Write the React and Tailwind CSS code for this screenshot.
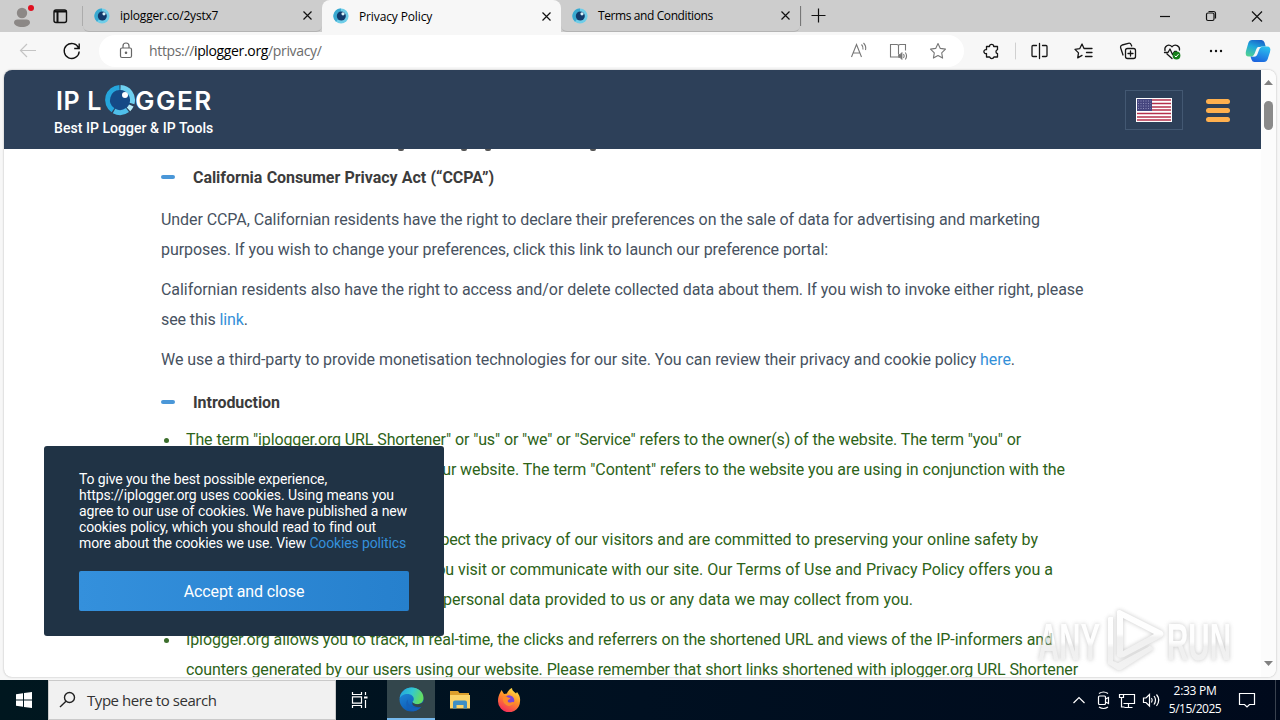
import clsx from "clsx";

const TABS = [
  {
    title: "iplogger.co/2ystx7",
    titleStyle: "tracking-[-0.2px]",
  },
  {
    title: "Privacy Policy",
    titleStyle: "tracking-[-0.13px]",
    active: true,
  },
  {
    title: "Terms and Conditions",
    titleStyle: "tracking-[-0.4px]",
  },
];

const Favicon = () => (
  <svg width="16" height="16" viewBox="0 0 16 16" className="shrink-0">
    <circle cx="8" cy="8" r="7.6" fill="#6fcde8" />
    <path d="M8 .4a7.6 7.6 0 0 0-5 13.3L8 8Z" fill="#3aa9d0" />
    <circle cx="8.3" cy="8" r="4.5" fill="#123a6b" />
    <circle cx="10" cy="5.800" r="1.600" fill="#d8f3fb" />
  </svg>
);

const CloseIcon = () => (
  <svg width="9" height="9" viewBox="0 0 9 9" stroke="#111" strokeWidth="1.2">
    <path d="M.5.5l8 8M8.500.5l-8 8" />
  </svg>
);

// A single line of text stretched to a given width
const Line = ({ className, children }) => (
  <span
    className={clsx(
      "block whitespace-nowrap [text-align-last:justify]",
      className,
    )}
  >
    {children}
  </span>
);

const TabBar = () => (
  <div className="flex h-8 items-start bg-[#cdcdcd]">
    <div className="flex h-8 w-[83px] items-center">
      <svg width="83" height="32" viewBox="0 0 83 32" fill="none">
        <circle cx="22" cy="13" r="5.2" fill="#8c8886" />
        <path
          d="M14 22.500c0-2 1.500-3 3.500-3h9c2 0 3.500 1 3.500 3 0 2.500-3.500 4.500-8 4.500s-8-2-8-4.500Z"
          fill="#8c8886"
        />
        <circle cx="31" cy="8" r="3" fill="#e01020" />
        <rect
          x="54"
          y="10"
          width="12.500"
          height="12.500"
          rx="2"
          stroke="#111"
          strokeWidth="1.400"
        />
        <path d="M54 11.500h12.500M57.500 12v10" stroke="#111" strokeWidth="2" />
        <path d="M83 6v20" stroke="#8a8a8a" />
      </svg>
    </div>
    {TABS.map((tab) => (
      <div
        key={tab.title}
        className={clsx(
          "flex h-8 w-[239px] items-center pr-[10px] pl-[11px]",
          tab.active
            ? "rounded-t-lg bg-[#f7f7f7]"
            : "rounded-b-md border-b border-[#b4b4b4]",
        )}
      >
        <Favicon />
        <span
          className={clsx(
            "ml-[10px] pt-px text-[12px] leading-4 whitespace-nowrap text-black",
            tab.titleStyle,
          )}
        >
          {tab.title}
        </span>
        <span className="ml-auto">
          <CloseIcon />
        </span>
      </div>
    ))}
    <svg
      width="480"
      height="32"
      viewBox="800 0 480 32"
      fill="none"
      stroke="#111"
      strokeWidth="1.200"
    >
      <path d="M800.500 6v20" stroke="#777" />
      <path d="M811.500 15.500h14M818.500 8.500v14" />
      <path d="M1160 16.500h10" />
      <rect x="1206.500" y="13" width="7.500" height="7.500" rx="1.500" />
      <path d="M1208.500 11.500h5a2 2 0 0 1 2 2v5" />
      <path d="M1252 11.500l10 10M1262 11.500l-10 10" />
    </svg>
  </div>
);

const Toolbar = () => (
  <div className="flex h-[38px] items-start bg-[#f7f7f7]">
    <svg width="99" height="38" viewBox="0 32 99 38" fill="none">
      <path
        d="M20.500 50.500h15.500M27 44l-6.500 6.500L27 57"
        stroke="#c4c4c4"
        strokeWidth="1.200"
      />
      <path
        d="M78.600 48A7.500 7.500 0 1 0 79.200 51.500M79.200 43.500v5h-5"
        stroke="#111"
        strokeWidth="1.400"
      />
    </svg>
    <div className="mt-[3px] flex h-8 w-[865px] items-center rounded-full bg-white">
      <svg
        width="50"
        height="32"
        viewBox="99 35 50 32"
        fill="none"
        stroke="#666"
        strokeWidth="1.200"
      >
        <rect x="120.500" y="48" width="11" height="9.500" rx="1.500" />
        <path d="M123 48v-2a3 3 0 0 1 6 0v2" />
        <circle cx="126" cy="52.800" r=".7" fill="#666" />
      </svg>
      <span className="text-[14px] leading-5 tracking-[-0.35px] whitespace-nowrap text-[#6b6b6b]">
        https://<span className="text-black">iplogger.org</span>/privacy/
      </span>
      <svg
        width="120"
        height="32"
        viewBox="844 35 120 32"
        fill="none"
        stroke="#777"
        strokeWidth="1.100"
        className="ml-auto"
      >
        <path d="M851.500 57l5-12.500 5 12.500M853.300 53h6.500" />
        <path d="M861.500 44.500q2 2 1.500 5M863.500 43q3 3 2 7" />
        <path d="M898.500 46q0-1.500-1.500-1.500h-6.500v12.500h7.500M898.500 46q0-1.500 1.500-1.500h5.500v6M898.500 46v8" />
        <path
          d="M898.500 54.500h1.500l2-2v7l-2-2h-1.500Z"
          fill="#777"
          strokeWidth=".8"
        />
        <path d="M903.500 54q1.500 2 0 4M905.300 52.500q2.500 3.500 0 7" />
        <path
          d="M938 43.500l2.300 4.900 5.200.7-3.800 3.700.9 5.300-4.600-2.600-4.600 2.600.9-5.300-3.800-3.700 5.200-.7Z"
          strokeLinejoin="round"
        />
      </svg>
    </div>
    <svg
      width="316"
      height="38"
      viewBox="964 32 316 38"
      fill="none"
      stroke="#161616"
      strokeWidth="1.300"
      strokeLinejoin="round"
      strokeLinecap="round"
    >
      <defs>
        <linearGradient id="copilotA" x1=".7" y1="0" x2=".3" y2="1">
          <stop offset="0" stopColor="#1a62c8" />
          <stop offset=".45" stopColor="#1fa6dc" />
          <stop offset="1" stopColor="#4fcf96" />
        </linearGradient>
        <linearGradient id="copilotB" x1=".7" y1="0" x2=".3" y2="1">
          <stop offset="0" stopColor="#2cc0ee" />
          <stop offset="1" stopColor="#1b62de" />
        </linearGradient>
      </defs>
      <path d="M986.500 46.500h3a2.100 2.100 0 0 1 4.200 0h3.800v3.200a2 2 0 0 0 0 3.900v3.400h-3.600a2.200 2.200 0 0 1-4.200 0h-3.200v-3.500a2 2 0 1 1 0-3.800Z" />
      <path d="M1015.500 43v16" stroke="#d0d0d0" strokeWidth="1" />
      <path d="M1036.500 45.500h-3.500a1 1 0 0 0-1 1v9a1 1 0 0 0 1 1h3.500M1042.500 45.500h3.500a1 1 0 0 1 1 1v9a1 1 0 0 1-1 1h-3.500M1039.500 43.500v15" />
      <path d="M1086 48.500h-2l-2-4.500-2.300 4.700-4.700.7 3.500 3.500-.8 5 4.300-2.500M1086 48.500h6M1086.500 52.500h5.500M1085.500 56.500h6.500" />
      <rect x="1125.500" y="48.500" width="10" height="10" rx="2" />
      <path d="M1130.500 51v5M1128 53.500h5M1123 55l-2.300-7a2.500 2.500 0 0 1 1.500-3l6-1.700a2.500 2.500 0 0 1 3 1.500l.5 1.200" />
      <path d="M1165 50.500c-1-4 3.500-7.500 7-3.700 3.500-3.800 8-.3 7.500 3.200M1167 54l5 4.500M1164.500 52.500h3.500l2-3.500 2.500 5.500 2-3h2" />
      <circle cx="1176.500" cy="55.500" r="3.900" fill="#16801a" stroke="none" />
      <path d="M1175 56l1 1 2.300-2.600" stroke="#fff" strokeWidth="1" />
      <g fill="#111" stroke="none">
        <circle cx="1211" cy="51" r="1.200" />
        <circle cx="1216" cy="51" r="1.200" />
        <circle cx="1221" cy="51" r="1.200" />
      </g>
      <g stroke="none">
        <path
          d="M1252 40h9.500q2.200 0 3 2.500l1.200 4h-4.200q-2.500 0-3.300 2.500l-2 5.500q-.8 2-3.200 2h-4q-4.500 0-3-5.500l2.300-8q1-3 3.700-3Z"
          fill="url(#copilotA)"
        />
        <path
          d="M1264 62h-9.500q-2.200 0-3-2.500l-1-3h3q2.500 0 3.300-2.500l2-5.500q.8-2 3.200-2h5q4.500 0 3 5.500l-2.300 7q-1 3-3.700 3Z"
          fill="url(#copilotB)"
        />
        <path
          d="M1258 47h3.500q-1.700.5-2.500 3l-1.700 4.500q-.6 1.500-2 2h-3.300q1.700-.7 2.400-2.500l2-5q.6-1.500 1.600-2Z"
          fill="#f7f7f7"
        />
      </g>
    </svg>
  </div>
);

const Logo = () => (
  <div className="flex h-[79px] flex-col pt-3 pl-[50px] text-white">
    <div className="flex h-9 items-center font-['Inter'] text-[25px] leading-8 font-semibold">
      <span className="w-[48px] pt-px pl-[2px] tracking-[0.6px] whitespace-nowrap">
        IP L
      </span>
      <svg
        width="34"
        height="34"
        viewBox="0 0 34 34"
        className="mb-[3px] shrink-0"
      >
        <circle cx="18" cy="18" r="10.500" fill="#154a86" />
        <g fill="none" strokeWidth="5">
          <path d="M18.500 5.500a12.500 12.500 0 0 1 11.500 16" stroke="#6ed0f0" />
          <path d="M29.300 23.500a12.500 12.500 0 0 1-2.800 3.800" stroke="#b9ecf8" />
          <path d="M25.500 28a12.500 12.500 0 0 1-13.500 1" stroke="#4fbfea" />
          <path d="M11 28.300A12.500 12.500 0 0 1 17.500 5.500" stroke="#25a5dc" />
        </g>
        <circle cx="23" cy="13" r="3" fill="#fff" />
      </svg>
      <span className="-ml-px pt-px text-[26px] tracking-[1.500px]">GGER</span>
    </div>
    <p className="mt-[1px] w-[160px] text-[14px] leading-[18px] font-medium tracking-[0.05px] whitespace-nowrap">
      Best IP Logger &amp; IP Tools
    </p>
  </div>
);

const Flag = () => (
  <svg width="36" height="24" viewBox="0 0 36 24">
    <rect width="36" height="24" fill="#fff" />
    <path
      d="M1 2h34M1 5.500h34M1 9h34M1 12h34M1 15.500h34M1 19h34M1 22h34"
      stroke="#b5304c"
      strokeWidth="1.500"
    />
    <rect x="1" y="1" width="15" height="12" fill="#46467f" />
    <path
      d="M2 3h13M2 5.500h13M2 8h13M2 10.500h13"
      stroke="#8f8fba"
      strokeWidth="1"
      strokeDasharray="1 1.500"
    />
  </svg>
);

const SiteHeader = () => (
  <header className="relative z-10 flex h-[79px] shrink-0 justify-between bg-[#2d4059]">
    <Logo />
    <div className="mt-5 flex h-10 items-center gap-[23px] pr-[31px]">
      <div className="flex h-10 w-[58px] items-center justify-center border border-[#435872]">
        <Flag />
      </div>
      <div className="flex w-6 flex-col gap-1">
        <span className="h-[5px] rounded-full bg-[#ffb04e]" />
        <span className="h-[5px] rounded-full bg-[#ffb04e]" />
        <span className="h-[5px] rounded-full bg-[#ffb04e]" />
      </div>
    </div>
  </header>
);

const SectionTitle = ({ children, width }) => (
  <div className="flex h-[30px] items-center">
    <span className="h-1 w-[14px] rounded-full bg-[#4a97d8]" />
    <h2 className="ml-[18px] pt-[2px] text-[16px] font-bold tracking-[-0.06px] text-[#3c3c3c]">
      <Line className={width}>{children}</Line>
    </h2>
  </div>
);

const Link = ({ children }) => <a className="text-[#3490d8]">{children}</a>;

const Bullet = ({ className, children }) => (
  <li className={clsx("flex", className)}>
    <span className="mt-[13px] mr-[17px] h-[5px] w-[5px] shrink-0 rounded-full bg-[#3c6e2c]" />
    <div>{children}</div>
  </li>
);

const Article = () => (
  <main className="pl-[157px] text-[16px] leading-[30px] tracking-[-0.06px] text-[#47525f]">
    {/* Tails of the title that is scrolled under the header */}
    <div className="flex h-[13px] pl-[237px]">
      <span className="h-[2px] w-[6px] rounded-b-full bg-[#555]" />
      <span className="ml-[57px] h-[2px] w-[6px] rounded-b-full bg-[#555]" />
      <span className="ml-[18px] h-[2px] w-[6px] rounded-b-full bg-[#555]" />
      <span className="ml-[99px] h-[2px] w-[6px] rounded-b-full bg-[#555]" />
    </div>
    <SectionTitle width="w-[301px]">
      California Consumer Privacy Act (“CCPA”)
    </SectionTitle>
    <p className="mt-[13px]">
      <Line className="w-[879px] tracking-[-0.076px]">
        Under CCPA, Californian residents have the right to declare their
        preferences on the sale of data for advertising and marketing
      </Line>
      <Line className="w-[667px] tracking-[-0.076px]">
        purposes. If you wish to change your preferences, click this link to
        launch our preference portal:
      </Line>
    </p>
    <p className="mt-[10px]">
      <Line className="w-[922.500px]">
        Californian residents also have the right to access and/or delete
        collected data about them. If you wish to invoke either right, please
      </Line>
      <Line className="w-[86.500px] tracking-[-0.1px]">
        see this <Link>link</Link>.
      </Line>
    </p>
    <p className="mt-[10px]">
      <Line className="w-[854px] tracking-[-0.07px]">
        We use a third-party to provide monetisation technologies for our site.
        You can review their privacy and cookie policy <Link>here</Link>.
      </Line>
    </p>
    <div className="mt-[12px]">
      <SectionTitle width="w-[87px]">Introduction</SectionTitle>
    </div>
    <ul className="mt-[8px] ml-[3px] text-[#2d6318]">
      <Bullet>
        <Line className="w-[835px] tracking-[-0.12px]">
          The term "iplogger.org URL Shortener" or "us" or "we" or "Service"
          refers to the owner(s) of the website. The term "you" or
        </Line>
        <Line className="w-[879px] tracking-[-0.08px]">
          <span className="tracking-[-0.28px]">
            "your" refers to the user or viewer of our
          </span>{" "}
          website. The term "Content" refers to the website you are using in
          conjunction with the
        </Line>
        <Line className="w-[70px]">services.</Line>
      </Bullet>
      <Bullet className="mt-[10px]">
        <Line className="w-[852px] tracking-[-0.03px]">
          <span className="tracking-[-0.25px]">
            At iplogger.org, we value and fully respect
          </span>{" "}
          the privacy of our visitors and are committed to preserving your
          online safety by
        </Line>
        <Line className="w-[867px] tracking-[-0.01px]">
          <span className="tracking-[-0.28px]">
            guarding your privacy any time that you
          </span>{" "}
          visit or communicate with our site. Our Terms of Use and Privacy
          Policy offers you a
        </Line>
        <Line className="w-[727px] tracking-[-0.03px]">
          <span className="tracking-[-0.2px]">
            full explanation of how we treat your
          </span>{" "}
          personal data provided to us or any data we may collect from you.
        </Line>
      </Bullet>
      <Bullet className="mt-[10px]">
        <Line className="w-[867px] tracking-[-0.11px]">
          Iplogger.org allows you to track, in real-time, the clicks and
          referrers on the shortened URL and views of the IP-informers and
        </Line>
        <Line className="w-[892px] tracking-[-0.13px]">
          counters generated by our users using our website. Please remember
          that short links shortened with iplogger.org URL Shortener
        </Line>
      </Bullet>
    </ul>
  </main>
);

const CookieNotice = () => (
  <div className="absolute top-[376px] left-10 z-20 h-[190px] w-[400px] rounded-[3px] bg-[#203345] px-[35px] pt-[25px] text-white">
    <div className="text-[14px] leading-4 tracking-[-0.15px]">
      <Line className="w-[248px]">
        To give you the best possible experience,
      </Line>
      <Line className="w-[315px] tracking-[-0.08px]">
        https://iplogger.org uses cookies. Using means you
      </Line>
      <Line className="w-[328px]">
        agree to our use of cookies. We have published a new
      </Line>
      <Line className="w-[297px]">
        cookies policy, which you should read to find out
      </Line>
      <Line className="w-[327px]">
        more about the cookies we use. View{" "}
        <a className="text-[#3490dc]">Cookies politics</a>
      </Line>
    </div>
    <button className="mt-5 h-10 w-[330px] rounded-[2px] bg-linear-to-r from-[#3490dc] to-[#2680cd] pt-px text-[16px] tracking-[-0.12px]">
      Accept and close
    </button>
  </div>
);

const Watermark = () => (
  <div className="absolute right-[38px] bottom-0 z-20 opacity-65">
    <svg
      width="206"
      height="72"
      viewBox="0 0 206 72"
      className="drop-shadow-[0_0_2px_#aaa]"
    >
      <defs>
        <linearGradient id="mark" x1="0" y1="0" x2="0" y2="1">
          <stop offset="0" stopColor="#fff" />
          <stop offset=".5" stopColor="#fdfdfd" />
          <stop offset=".58" stopColor="#e8e8e8" />
          <stop offset="1" stopColor="#ececec" />
        </linearGradient>
      </defs>
      <g
        fill="url(#mark)"
        className="font-['Liberation_Sans'] text-[52px] font-bold"
      >
        <text x="6" y="55" textLength="62" lengthAdjust="spacingAndGlyphs">
          ANY
        </text>
        <text x="135" y="55" textLength="64" lengthAdjust="spacingAndGlyphs">
          RUN
        </text>
        <path
          d="M85 6q2-2 5 0l40 20q3 3 0 6L92 52q-5 2-7-1ZM91 13v33l31-17Z"
          fillRule="evenodd"
        />
        <path d="M76 13q1-2 5-1v44l5 2 32-17 4 3-33 21q-3 1-5-1l-8-5Z" />
      </g>
    </svg>
  </div>
);

const ScrollBar = () => (
  <div className="flex w-[15px] flex-col items-center justify-between bg-[#fcfcfc] py-[9px]">
    <div className="flex flex-col items-center gap-4">
      <svg width="9" height="6" viewBox="0 0 9 6">
        <path d="M0 6l4.500-5L9 6Z" fill="#808080" />
      </svg>
      <span className="h-[29px] w-[9px] rounded-full bg-[#8a8a8a]" />
    </div>
    <svg width="9" height="6" viewBox="0 0 9 6" className="mb-px">
      <path d="M0 0l4.500 5L9 0Z" fill="#808080" />
    </svg>
  </div>
);

const TaskBar = () => (
  <footer className="flex h-10 bg-linear-to-r from-[#00171f] via-[#001021] to-[#000a1c] text-white">
    <div className="flex w-12 items-center justify-center">
      <svg width="16" height="16" viewBox="0 0 16 16" fill="#fff">
        <path d="M0 2.300l7-1v6.200H0ZM8 1.100l8-1.100v7.500H8ZM0 8.500h7v6.200l-7-1ZM8 8.500h8V16l-8-1.100Z" />
      </svg>
    </div>
    <div className="flex w-[288px] items-center border border-[#cacaca] bg-[#f1f1f1] pl-[10px] text-[#333]">
      <svg
        width="18"
        height="18"
        viewBox="0 0 18 18"
        fill="none"
        stroke="#222"
        strokeWidth="1.400"
      >
        <circle cx="10.500" cy="6.500" r="5" />
        <path d="M7 10.200L1 16" />
      </svg>
      <span className="ml-[10px] text-[15px] leading-5 tracking-[-0.45px] whitespace-nowrap">
        Type here to search
      </span>
    </div>
    <div className="flex w-[51px] items-center justify-center pr-[3px]">
      <svg
        width="18"
        height="16"
        viewBox="0 0 18 16"
        fill="none"
        stroke="#fff"
        strokeWidth="1.200"
      >
        <path d="M1.500 0v2.500h9V0M1.500 16v-2.500h9V16M1.500 4.800h9v6.400h-9ZM14.500 0v3M14.500 8v8" />
        <path d="M13 5.500h3.500" strokeWidth="2" />
      </svg>
    </div>
    <div className="flex w-12 items-center justify-center border-b-2 border-[#76b9ed] bg-[#33464c]">
      <svg width="25" height="25" viewBox="0 0 24 24">
        <defs>
          <linearGradient id="edgeTop" x1="0" y1="0" x2="1" y2=".3">
            <stop offset="0" stopColor="#1f9fe0" />
            <stop offset=".55" stopColor="#33c8d0" />
            <stop offset="1" stopColor="#63dc62" />
          </linearGradient>
          <linearGradient id="edgeBody" x1="0" y1="0" x2=".5" y2="1">
            <stop offset="0" stopColor="#2391dd" />
            <stop offset="1" stopColor="#0b59b5" />
          </linearGradient>
        </defs>
        <circle cx="12" cy="12" r="11.500" fill="url(#edgeBody)" />
        <path
          d="M.6 11C1.300 5 6.200.5 12 .5c6.500 0 11.500 4.500 11.500 10 0 4-3 6-6 6-2.800 0-4.500-1-4.500-2 0-.7 1.200-1 1.200-3 0-2.600-2.600-4.800-6-4.800C4.500 6.700 1.500 8.500.6 11Z"
          fill="url(#edgeTop)"
        />
        <path
          d="M8.500 12c-.5 5 3.500 8 8 8 2 0 4-.6 5.500-2a11.500 11.500 0 0 1-8 5.300C9.500 23 7 19 7 16c0-2 .7-3.300 1.500-4Z"
          fill="#1561b8"
        />
        <path
          d="M13 14.500c.5 2 6.500 3.200 10 .2 1 0 1 2.500-.5 4-4.500 2-11.200-.2-9.500-4.200Z"
          fill="#33464c"
        />
      </svg>
    </div>
    <div className="flex w-[49px] items-center justify-center">
      <svg width="22" height="20" viewBox="0 0 22 20">
        <path d="M1 1h8l1.500 2H20v6H1Z" fill="#dca02c" />
        <path d="M1 5h20v13.500H1Z" fill="#fbd468" />
        <path
          d="M4 18.500v-6q0-2 2-2h10q2 0 2 2v6h-3.500v-3.500h-7v3.500Z"
          fill="#3d8fc4"
        />
      </svg>
    </div>
    <div className="flex w-[50px] items-center justify-center">
      <svg width="24" height="24" viewBox="0 0 24 24">
        <defs>
          <linearGradient id="fox" x1=".8" y1="0" x2=".3" y2="1">
            <stop offset="0" stopColor="#ffe84a" />
            <stop offset=".45" stopColor="#ff9328" />
            <stop offset="1" stopColor="#f5295c" />
          </linearGradient>
        </defs>
        <path
          d="M3 5l1.500-3 2.500 4 3-.5C10.500 3 13 1 15 0c0 3 3 4 4 5.500l1-1.500c2.500 3 3.500 6 3 9.500A11 11 0 0 1 1 13c0-3 .7-6 2-8Z"
          fill="url(#fox)"
        />
        <circle cx="12" cy="12.500" r="5.300" fill="#7a45d8" />
        <path
          d="M6 8.500c2-.7 4-.2 5 1 1 .3 2 .4 2.500.6-.4 1.200-2 1.500-2.700 2.500-.3 1.500 1.700 2.500 3.700 1.700 1.500-.5 2.500-.6 3 .2-1 2.500-3.500 3.800-6 3.500-3.500-.5-6.500-4-5.500-9.500Z"
          fill="#ff8a2a"
        />
      </svg>
    </div>
    <svg
      width="100"
      height="40"
      viewBox="1065 680 100 40"
      fill="none"
      stroke="#fff"
      strokeWidth="1.200"
      className="ml-auto"
    >
      <path d="M1073.500 703l5.500-5.500 5.500 5.500" />
      <rect x="1098.500" y="696" width="7" height="8.500" rx="1" />
      <path d="M1105.500 699l3-1.500v6l-3-1.500M1099 693.500q4.500-3 9 0M1099 707q4.500 3 9 0" />
      <path d="M1124 694.500h10.500v9h-11M1128.500 704v3.500M1124.500 707.500h8M1119.500 694.500h4v3h-4ZM1121.500 697.500v9.500h3" />
      <path d="M1143.500 698v4.500h2.500l3.500 3.500v-11.500l-3.500 3.500ZM1151.500 698q1.500 2 0 4.500M1154 696q3 4 0 8.500M1156.500 694.500q4.500 5.500 0 11.500" />
    </svg>
    <div className="flex w-[60px] flex-col items-center pt-[2px] text-[12px] leading-[18px] tracking-[-0.5px] whitespace-nowrap">
      <span className="tracking-[-0.3px]">2:33 PM</span>
      <span>5/15/2025</span>
    </div>
    <svg
      width="55"
      height="40"
      viewBox="1225 680 55 40"
      fill="none"
      stroke="#fff"
      strokeWidth="1.200"
    >
      <path d="M1239.500 693.500h15v11h-5l-2.500 2.500-2.500-2.500h-5Z" />
      <path d="M1275.500 680v40" stroke="#39424f" strokeWidth="1" />
    </svg>
  </footer>
);

const App = () => {
  return (
    <div className="flex h-[720px] w-[1280px] flex-col overflow-hidden bg-[#f7f7f7] font-['Open_Sans',sans-serif]">
      <TabBar />
      <Toolbar />
      <div className="relative mx-1 mb-[3px] flex h-[607px] overflow-hidden rounded-lg bg-white font-['Roboto',sans-serif] shadow-[0_0_2px_#aaa]">
        <div className="flex w-[1257px] flex-col overflow-hidden">
          <SiteHeader />
          <Article />
        </div>
        <ScrollBar />
        <CookieNotice />
        <Watermark />
      </div>
      <TaskBar />
    </div>
  );
};

export default App;
